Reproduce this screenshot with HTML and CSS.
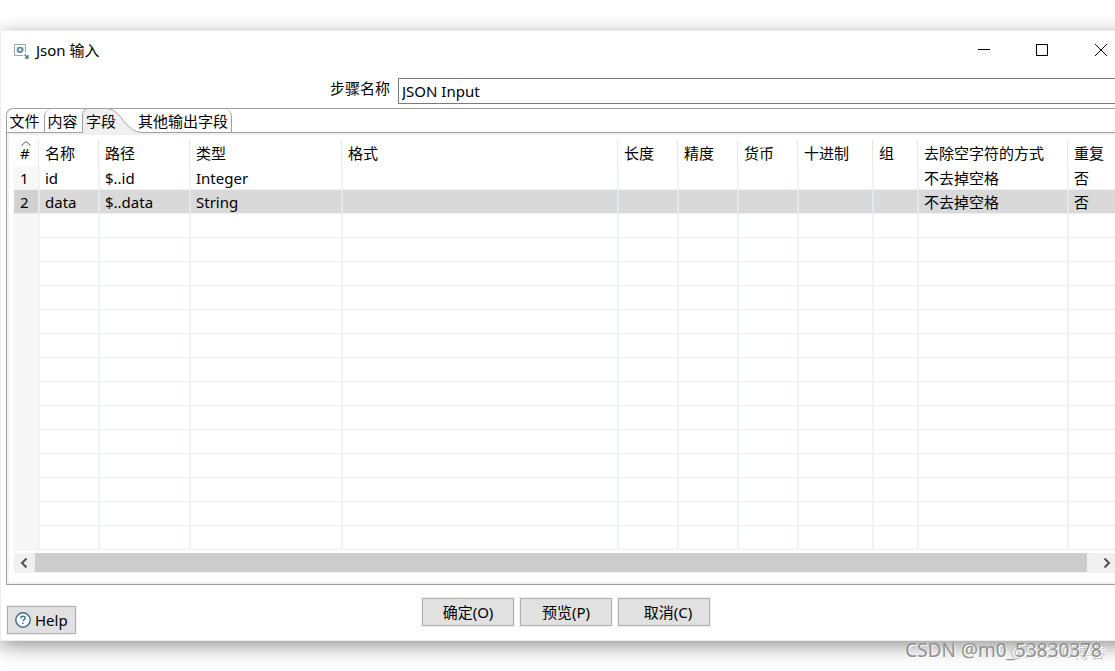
FILE: index.html
```html
<!DOCTYPE html>
<html lang="zh-CN">
<head>
<meta charset="utf-8">
<title>Json 输入</title>
<link rel="stylesheet" href="styles.css">
</head>
<body>
<main class="window">
  <header class="titlebar">
    <svg class="app-icon" width="16" height="16" viewBox="0 0 16 16" fill="none">
      <path d="M10 12.500H1.500V1.500H12.500V9" stroke="#8fa9bd"/>
      <path d="M4 4v6M10.500 4v5" stroke="#c3d1dc"/>
      <circle cx="7" cy="6.800" r="2.300" fill="#e6eef4" stroke="#5c7f9c" stroke-width="1.600"/>
      <path d="M11.500 11.500l3 3M15 12v3h-3" stroke="#4a7b9d" stroke-width="1.300"/>
    </svg>
    <h1 class="title">Json 输入</h1>
    <button class="win-btn" aria-label="最小化"><svg width="12" height="12"><path d="M0 5.500H12" stroke="#000"/></svg></button>
    <button class="win-btn" aria-label="最大化"><svg width="12" height="12"><rect x=".5" y=".5" width="11" height="11" fill="none" stroke="#000"/></svg></button>
    <button class="win-btn win-close" aria-label="关闭"><svg width="12" height="12"><path d="M0 0L12 12M12 0L0 12" stroke="#000"/></svg></button>
  </header>

  <div class="step">
    <label class="step-label" for="step-name">步骤名称</label>
    <input class="step-input" id="step-name" type="text" value="JSON Input">
  </div>

  <div class="tabs" role="tablist">
    <button class="tab" role="tab">文件</button>
    <button class="tab tab-second" role="tab">内容</button>
    <button class="tab tab-active" role="tab" aria-selected="true">
      <svg class="tab-shape" width="64" height="26" viewBox="0 0 64 26">
        <path d="M0 26V7Q0 1 6 .5H24C40 .5 42 24.500 61 24.500V26Z" fill="#f0f0f0"/>
        <path d="M.5 25V7Q1 1 6 .5H24C40 .5 42 24.500 61 24.500" fill="none" stroke="#a0a0a0"/>
      </svg>
      <span class="tab-text">字段</span>
    </button>
    <button class="tab tab-last" role="tab">其他输出字段</button>
  </div>

  <section class="panel">
    <table class="grid">
      <colgroup>
        <col class="w-num"><col class="w-60"><col class="w-path"><col class="w-type"><col class="w-format">
        <col class="w-60"><col class="w-60"><col class="w-60"><col class="w-75"><col class="w-45"><col class="w-trim"><col>
      </colgroup>
      <thead>
        <tr><th class="num"><svg class="sort" width="10" height="5"><path d="M.5 4.500L5 .5L9.500 4.500" fill="none" stroke="#555"/></svg>#</th><th>名称</th><th>路径</th><th>类型</th><th>格式</th><th>长度</th><th>精度</th><th>货币</th><th>十进制</th><th>组</th><th>去除空字符的方式</th><th>重复</th></tr>
      </thead>
      <tbody>
        <tr><td>1</td><td>id</td><td>$..id</td><td>Integer</td><td></td><td></td><td></td><td></td><td></td><td></td><td>不去掉空格</td><td>否</td></tr>
        <tr class="selected"><td>2</td><td>data</td><td>$..data</td><td>String</td><td></td><td></td><td></td><td></td><td></td><td></td><td>不去掉空格</td><td>否</td></tr>
        <tr><td></td><td></td><td></td><td></td><td></td><td></td><td></td><td></td><td></td><td></td><td></td><td></td></tr>
        <tr><td></td><td></td><td></td><td></td><td></td><td></td><td></td><td></td><td></td><td></td><td></td><td></td></tr>
        <tr><td></td><td></td><td></td><td></td><td></td><td></td><td></td><td></td><td></td><td></td><td></td><td></td></tr>
        <tr><td></td><td></td><td></td><td></td><td></td><td></td><td></td><td></td><td></td><td></td><td></td><td></td></tr>
        <tr><td></td><td></td><td></td><td></td><td></td><td></td><td></td><td></td><td></td><td></td><td></td><td></td></tr>
        <tr><td></td><td></td><td></td><td></td><td></td><td></td><td></td><td></td><td></td><td></td><td></td><td></td></tr>
        <tr><td></td><td></td><td></td><td></td><td></td><td></td><td></td><td></td><td></td><td></td><td></td><td></td></tr>
        <tr><td></td><td></td><td></td><td></td><td></td><td></td><td></td><td></td><td></td><td></td><td></td><td></td></tr>
        <tr><td></td><td></td><td></td><td></td><td></td><td></td><td></td><td></td><td></td><td></td><td></td><td></td></tr>
        <tr><td></td><td></td><td></td><td></td><td></td><td></td><td></td><td></td><td></td><td></td><td></td><td></td></tr>
        <tr><td></td><td></td><td></td><td></td><td></td><td></td><td></td><td></td><td></td><td></td><td></td><td></td></tr>
        <tr><td></td><td></td><td></td><td></td><td></td><td></td><td></td><td></td><td></td><td></td><td></td><td></td></tr>
        <tr><td></td><td></td><td></td><td></td><td></td><td></td><td></td><td></td><td></td><td></td><td></td><td></td></tr>
        <tr><td></td><td></td><td></td><td></td><td></td><td></td><td></td><td></td><td></td><td></td><td></td><td></td></tr>
      </tbody>
    </table>
    <div class="scrollbar">
      <button class="scroll-btn" aria-label="向左滚动"><svg width="8" height="10"><path d="M6.500 .5L2 5l4.500 4.500" fill="none" stroke="#505050" stroke-width="2"/></svg></button>
      <div class="thumb"></div>
      <button class="scroll-btn scroll-right" aria-label="向右滚动"><svg width="8" height="10"><path d="M1.500 .5L6 5l-4.500 4.500" fill="none" stroke="#505050" stroke-width="2"/></svg></button>
    </div>
  </section>

  <footer class="footer">
    <button class="btn help"><svg width="16" height="16" viewBox="0 0 16 16" fill="none"><circle cx="8" cy="8" r="7.200" fill="#fff" stroke="#436c8c" stroke-width="1.500"/><path d="M5.800 6.300Q5.800 4.300 8 4.300T10.200 6.200Q10.200 7.300 8.900 7.900Q8 8.300 8 9.300M8 10.600v1.500" stroke="#436c8c" stroke-width="1.400"/></svg>Help</button>
    <div class="actions">
      <button class="btn action">确定(O)</button>
      <button class="btn action">预览(P)</button>
      <button class="btn action cancel">取消(C)</button>
    </div>
  </footer>
</main>
<div class="mark mark-back">@51CTO博客</div>
<div class="mark mark-front">CSDN @m0_53830378</div>
</body>
</html>
```
FILE: styles.css
```css
* { box-sizing: border-box; }

body {
  margin: 0;
  padding-top: 31px;
  min-height: 100vh;
  position: relative;
  overflow: hidden;
  background: #fff;
  color: #000;
  font: 15px/20px "Noto Sans", "Noto Sans CJK SC", sans-serif;
}

button, input { font: inherit; color: inherit; }
button { border: 0; padding: 0; background: none; }
svg { display: block; flex: none; }

/* The window runs past the right edge of the view. */
.window {
  margin: 0 -30px 0 1px;
  padding-right: 30px;
  background: #fff;
  box-shadow: 0 0 0 1px #ececec, 0 5px 18px 1px rgba(0, 0, 0, .42);
}

.titlebar { display: flex; align-items: center; height: 38px; padding-left: 12px; }
.app-icon { margin-top: 2px; }
.title { flex: 1; margin: 0 0 0 7px; font-size: 15px; font-weight: 400; }
.win-btn { display: flex; align-items: center; justify-content: center; width: 58px; height: 38px; }
.win-close { width: 44px; padding-left: 16px; }

.step { display: flex; padding: 9px 0 4px 329px; }
.step-label { width: 68px; }
.step-input {
  flex: 1;
  min-width: 0;
  height: 26px;
  padding: 0 3px;
  border: 1px solid #7a7a7a;
  border-right: 0;
  border-radius: 0;
  outline: 0;
  background: #fff;
}

.tabs {
  display: flex;
  height: 24px;
  margin-left: 5px;
  border: solid #a0a0a0;
  border-width: 1px 0 0 1px;
  border-top-left-radius: 7px;
}
.tab { width: 37px; height: 24px; padding-right: 2px; white-space: nowrap; }
.tab-second { width: 38px; border-left: 1px solid #a0a0a0; border-top-left-radius: 7px; }
.tab-active { position: relative; text-align: left; padding-left: 4px; }
.tab-shape { position: absolute; left: 0; top: -1px; }
.tab-text { position: relative; }
.tab-last { width: 113px; padding: 0 0 0 16px; border-right: 1px solid #a0a0a0; border-top-right-radius: 7px; }

.panel {
  margin-left: 5px;
  padding: 5px 0 11px 7px;
  border: solid #a0a0a0;
  border-width: 1px 0 1px 1px;
  box-shadow: inset 2px 2px #f0f0f0, inset 0 -2px #f0f0f0;
}

.grid { width: 100%; table-layout: fixed; border-collapse: separate; border-spacing: 0; }
.w-num { width: 26px; }
.w-45 { width: 45px; }
.w-60 { width: 60px; }
.w-75 { width: 75px; }
.w-path { width: 91px; }
.w-type { width: 152px; }
.w-format { width: 276px; }
.w-trim { width: 150px; }

.grid th, .grid td {
  padding: 0 0 0 5px;
  text-align: left;
  font-weight: 400;
  white-space: nowrap;
  line-height: 20px;
}
.grid th {
  height: 28px;
  padding-top: 2px;
  background: linear-gradient(#e5e5e5, #e5e5e5) right 1px bottom / 1px 26px no-repeat;
}
.grid td { height: 24px; border-right: 2px solid #edf2f9; border-bottom: 1px solid #f0f0f0; }
.grid th:last-child { background: none; }
.grid td:last-child { border-right: 0; }
.grid td:first-child { padding-left: 6px; background: #f7f7f7; }
.grid .num { position: relative; padding-left: 6px; }
.sort { position: absolute; left: 7px; top: 3px; }
.selected td { background: #d9d9d9; border-right-color: #e3e8ed; }
.grid .selected td:first-child { background: #d1d1d1; }

.scrollbar { display: flex; height: 20px; margin-top: 3px; background: #f0f0f0; }
.scroll-btn { display: flex; align-items: center; justify-content: center; width: 21px; height: 19px; padding-right: 2px; }
.scroll-right { width: 16px; margin-left: 12px; padding-right: 0; }
.thumb { flex: 1; height: 19px; background: #cdcdcd; }

.footer { display: flex; align-items: flex-start; padding: 13px 0 6px 6px; }
.btn { height: 28px; border: 1px solid #adadad; background: #e1e1e1; box-shadow: 0 0 0 1px #f3f3f3; }
.help { display: flex; align-items: center; gap: 4px; width: 69px; margin-top: 8px; padding-left: 7px; }
.actions { display: flex; gap: 6px; margin-left: 346px; }
.action { width: 92px; }
.cancel { padding-left: 8px; }

.mark { position: absolute; white-space: nowrap; }
.mark-back { right: 9px; bottom: 9px; font-size: 16px; color: #c4c4c4; text-shadow: 1px 1px #fff; }
.mark-front { right: 13px; bottom: 9px; font-size: 19px; line-height: 24px; color: #8f8f8f; text-shadow: 1px 1px #fff; }
```
